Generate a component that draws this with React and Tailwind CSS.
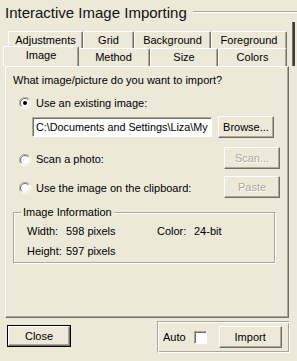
import React from "react";

const F = { fontFamily: '"Liberation Sans", Arial, sans-serif' };

function Radio({ checked }) {
  return (
    <svg width="12" height="12" viewBox="0 0 12 12" className="shrink-0">
      <path d="M10.5 2.5 A5.5 5.5 0 0 0 1.5 9.5" fill="none" stroke="#ACA899" strokeWidth="1" />
      <path d="M1.5 9.5 A5.5 5.5 0 0 0 10.5 2.5" fill="none" stroke="#FFFFFF" strokeWidth="1" />
      <circle cx="6" cy="6" r="4.5" fill="#FFFFFF" />
      <path d="M9.2 2.8 A4.5 4.5 0 0 0 2.8 9.2" fill="none" stroke="#716F64" strokeWidth="1" />
      <path d="M2.8 9.2 A4.5 4.5 0 0 0 9.2 2.8" fill="none" stroke="#F1EFE2" strokeWidth="1" />
      {checked && <circle cx="6" cy="6" r="2" fill="#000" />}
    </svg>
  );
}

function Btn({ children, w, disabled, isDefault }) {
  return (
    <div
      className={"h-[22px] bg-[#ECE9D8] " + (isDefault ? "border border-black" : "")}
      style={{ width: w }}
    >
      <div className="h-full w-full flex items-center justify-center border-t border-l border-t-white border-l-white border-r border-b border-r-[#716F64] border-b-[#716F64] shadow-[inset_-1px_-1px_0_#ACA899]">
        <span className={disabled ? "text-[#ACA899] [text-shadow:1px_1px_0_#fff]" : "text-black"}>
          {children}
        </span>
      </div>
    </div>
  );
}

function Tab({ label, w, selected }) {
  return (
    <div
      className={
        "flex items-center justify-center bg-[#ECE9D8] border-t border-l border-t-white border-l-white border-r border-r-[#716F64] shadow-[inset_-1px_0_0_#ACA899] rounded-t-[2px] " +
        (selected ? "h-[20px] -mt-[2px] relative z-10 -mx-[2px] pb-[2px]" : "h-[18px]")
      }
      style={{ width: selected ? w + 4 : w }}
    >
      <span className="text-[11px] text-black">{label}</span>
    </div>
  );
}

export default function App() {
  return (
    <div
      className="w-[297px] h-[361px] bg-[#ECE9D8] overflow-hidden text-[11px] text-black relative"
      style={F}
    >
      {/* title */}
      <div className="h-[24px] flex items-center">
        <span className="pl-[5px] text-[15px] leading-none text-[#111] whitespace-nowrap">
          Interactive Image Importing
        </span>
        <div className="flex-1 ml-[6px] border-t border-t-[#ACA899] border-b border-b-white h-[2px]" />
      </div>

      {/* tabs area */}
      <div className="flex">
        <div>
          {/* tabs back row */}
          <div className="mt-[7px] h-[17px] flex pl-[8px]">
            <Tab label="Adjustments" w={75} />
            <Tab label="Grid" w={51} />
            <Tab label="Background" w={77} />
            <Tab label="Foreground" w={76} />
          </div>
          {/* tabs front row */}
          <div className="h-[18px] flex pl-[5px] items-end">
            <Tab label="Image" w={72} selected />
            <Tab label="Method" w={73} />
            <Tab label="Size" w={68} />
            <Tab label="Colors" w={69} />
          </div>
        </div>
        <div className="ml-[5px] mt-[-2px] w-[3px] h-[44px] border-l border-l-[#716F64] bg-[#3f3e38]" />
      </div>

      {/* panel */}
      <div className="ml-[5px] w-[284px] h-[252px] border-l border-t border-l-white border-t-white border-r border-b border-r-[#716F64] border-b-[#716F64] shadow-[inset_-1px_-1px_0_#ACA899] flex flex-col pl-[7px]">
        <div className="mt-[6px] h-[14px] flex items-center">
          What image/picture do you want to import?
        </div>
        <div className="mt-[9px] h-[14px] flex items-center pl-[6px] gap-[5px]">
          <Radio checked />
          <span>Use an existing image:</span>
        </div>
        <div className="mt-[6px] flex items-center pl-[19px]">
          <div className="w-[180px] h-[20px] bg-white border-t border-l border-t-[#ACA899] border-l-[#ACA899] border-r border-b border-r-white border-b-white shadow-[inset_1px_1px_0_#716F64] flex items-center pl-[3px] overflow-hidden whitespace-nowrap text-[10.8px]">
            C:\Documents and Settings\Liza\My
          </div>
          <div className="ml-[6px]">
            <Btn w={56}>Browse...</Btn>
          </div>
        </div>
        <div className="mt-[9px] flex items-center justify-between pr-[8px]">
          <div className="flex items-center pl-[6px] gap-[5px] pt-[3px]">
            <Radio />
            <span>Scan a photo:</span>
          </div>
          <Btn w={56} disabled>
            Scan...
          </Btn>
        </div>
        <div className="mt-[7px] flex items-center justify-between pr-[8px]">
          <div className="flex items-center pl-[6px] gap-[5px] pt-[2px]">
            <Radio />
            <span>Use the image on the clipboard:</span>
          </div>
          <Btn w={56} disabled>
            Paste
          </Btn>
        </div>

        <div className="mt-[14px] w-[263px] h-[52px] border-t border-l border-t-[#ACA899] border-l-[#ACA899] border-r border-b border-r-white border-b-white shadow-[inset_-1px_-1px_0_#ACA899,inset_1px_1px_0_#fff] relative">
          <span className="absolute -top-[8px] left-[7px] px-[2px] bg-[#ECE9D8] leading-[14px]">
            Image Information
          </span>
          <div className="flex mt-[11px] pl-[13px] h-[14px] items-center">
            <span className="w-[39px]">Width:</span>
            <span className="w-[91px]">598 pixels</span>
            <span className="w-[37px]">Color:</span>
            <span>24-bit</span>
          </div>
          <div className="flex mt-[6px] pl-[13px] h-[14px] items-center">
            <span className="w-[39px]">Height:</span>
            <span>597 pixels</span>
          </div>
        </div>
      </div>

      {/* bottom */}
      <div className="flex items-start mt-[3px]">
        <div className="ml-[7px] mt-[4px]">
          <Btn w={64} isDefault>
            Close
          </Btn>
        </div>
        <div className="ml-auto mr-[7px] w-[133px] h-[32px] border-t border-l border-t-[#ACA899] border-l-[#ACA899] border-r border-b border-r-white border-b-white shadow-[inset_1px_1px_0_#fff,inset_-1px_-1px_0_#ACA899] flex items-center pl-[5px]">
          <span>Auto</span>
          <div className="ml-[8px] w-[13px] h-[13px] bg-white border-t border-l border-t-[#ACA899] border-l-[#ACA899] border-r border-b border-r-white border-b-white shadow-[inset_1px_1px_0_#716F64]" />
          <div className="ml-[12px]">
            <Btn w={63}>Import</Btn>
          </div>
        </div>
      </div>
    </div>
  );
}
